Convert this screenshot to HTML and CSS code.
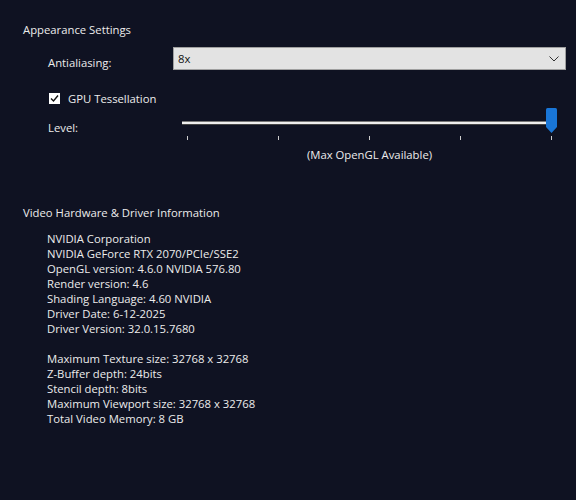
FILE: index.html
```html
<!DOCTYPE html>
<html>
	<head>
		<meta charset="utf-8">
		<title>Appearance Settings</title>
		<link rel="stylesheet" href="styles.css">
	</head>
	<body>
		<div class="panel">
			<h3 class="title">Appearance Settings</h3>
			<div class="row aa">
				<span class="label">Antialiasing:</span>
				<div class="select">
					<span>8x</span>
					<svg width="10" height="6" viewBox="0 0 10 6"><path d="M0.5 0.5 L5 5 L9.5 0.5" fill="none" stroke="#333" stroke-width="1"/></svg>
				</div>
			</div>
			<div class="row check">
				<span class="box">
					<svg width="11" height="11" viewBox="0 0 11 11"><path d="M2 5.5 L4.5 8 L9 2.5" fill="none" stroke="#111" stroke-width="1.4"/></svg>
				</span>
				<span>GPU Tessellation</span>
			</div>
			<div class="row level">
				<span class="label">Level:</span>
				<div class="slider">
					<div class="track"></div>
					<div class="thumb">
						<svg width="11" height="25" viewBox="0 0 11 25"><path d="M1.5 0 H9.5 Q11 0 11 1.5 V19 L5.5 25 L0 19 V1.5 Q0 0 1.5 0 Z" fill="#1976d8"/></svg>
					</div>
					<div class="ticks">
						<i></i><i></i><i></i><i></i><i></i>
					</div>
					<p class="caption">(Max OpenGL Available)</p>
				</div>
			</div>

			<h3 class="title hw">Video Hardware &amp; Driver Information</h3>
			<ul class="info">
				<li>NVIDIA Corporation</li>
				<li>NVIDIA GeForce RTX 2070/PCIe/SSE2</li>
				<li>OpenGL version: 4.6.0 NVIDIA 576.80</li>
				<li>Render version: 4.6</li>
				<li>Shading Language: 4.60 NVIDIA</li>
				<li>Driver Date: 6-12-2025</li>
				<li>Driver Version: 32.0.15.7680</li>
				<li class="gap">Maximum Texture size: 32768 x 32768</li>
				<li>Z-Buffer depth: 24bits</li>
				<li>Stencil depth: 8bits</li>
				<li>Maximum Viewport size: 32768 x 32768</li>
				<li>Total Video Memory: 8 GB</li>
			</ul>
		</div>
	</body>
</html>
```

FILE: styles.css
```css
*{margin:0;padding:0;box-sizing:border-box;}
ul{list-style:none;}
html,body{background:#0f1222;height:100%;}
body{font-family:"Open Sans","Noto Sans","DejaVu Sans",sans-serif;font-size:11.3px;line-height:15px;color:#ececec;}
div.panel{padding:22px 0 0 23px;width:576px;height:500px;}
h3.title{font-weight:normal;font-size:11.3px;height:15px;}
h3.hw{margin-top:43px;}
div.row{display:flex;align-items:center;padding-left:25px;}
div.row span.label{width:125px;}
div.aa{margin-top:10px;height:23px;}
div.aa span.label{padding-top:7px;}
div.select{width:393px;height:23px;background:#e3e3e3;border:1px solid #a0a0a0;color:#111;display:flex;align-items:center;justify-content:space-between;padding:0 6px 0 4px;}
div.check{margin-top:21px;}
div.check span.box{width:11px;height:11px;background:#fff;margin:0 8px 0 1px;display:flex;}
div.level{margin-top:14px;align-items:flex-start;}
div.level span.label{width:134px;}
div.slider{position:relative;width:375px;padding-top:1px;}
div.track{height:4px;background:#eee;border-top:1px solid #777;border-bottom:1px solid #444;}
div.thumb{position:absolute;right:0;top:-12px;display:flex;}
div.ticks{display:flex;justify-content:space-between;padding:0 5px;margin-top:11px;}
div.ticks i{display:block;width:1px;height:4px;background:#ccc;}
p.caption{text-align:center;margin-top:7px;}
ul.info{padding-left:24px;margin-top:11px;}
ul.info li.gap{margin-top:15px;}
```
